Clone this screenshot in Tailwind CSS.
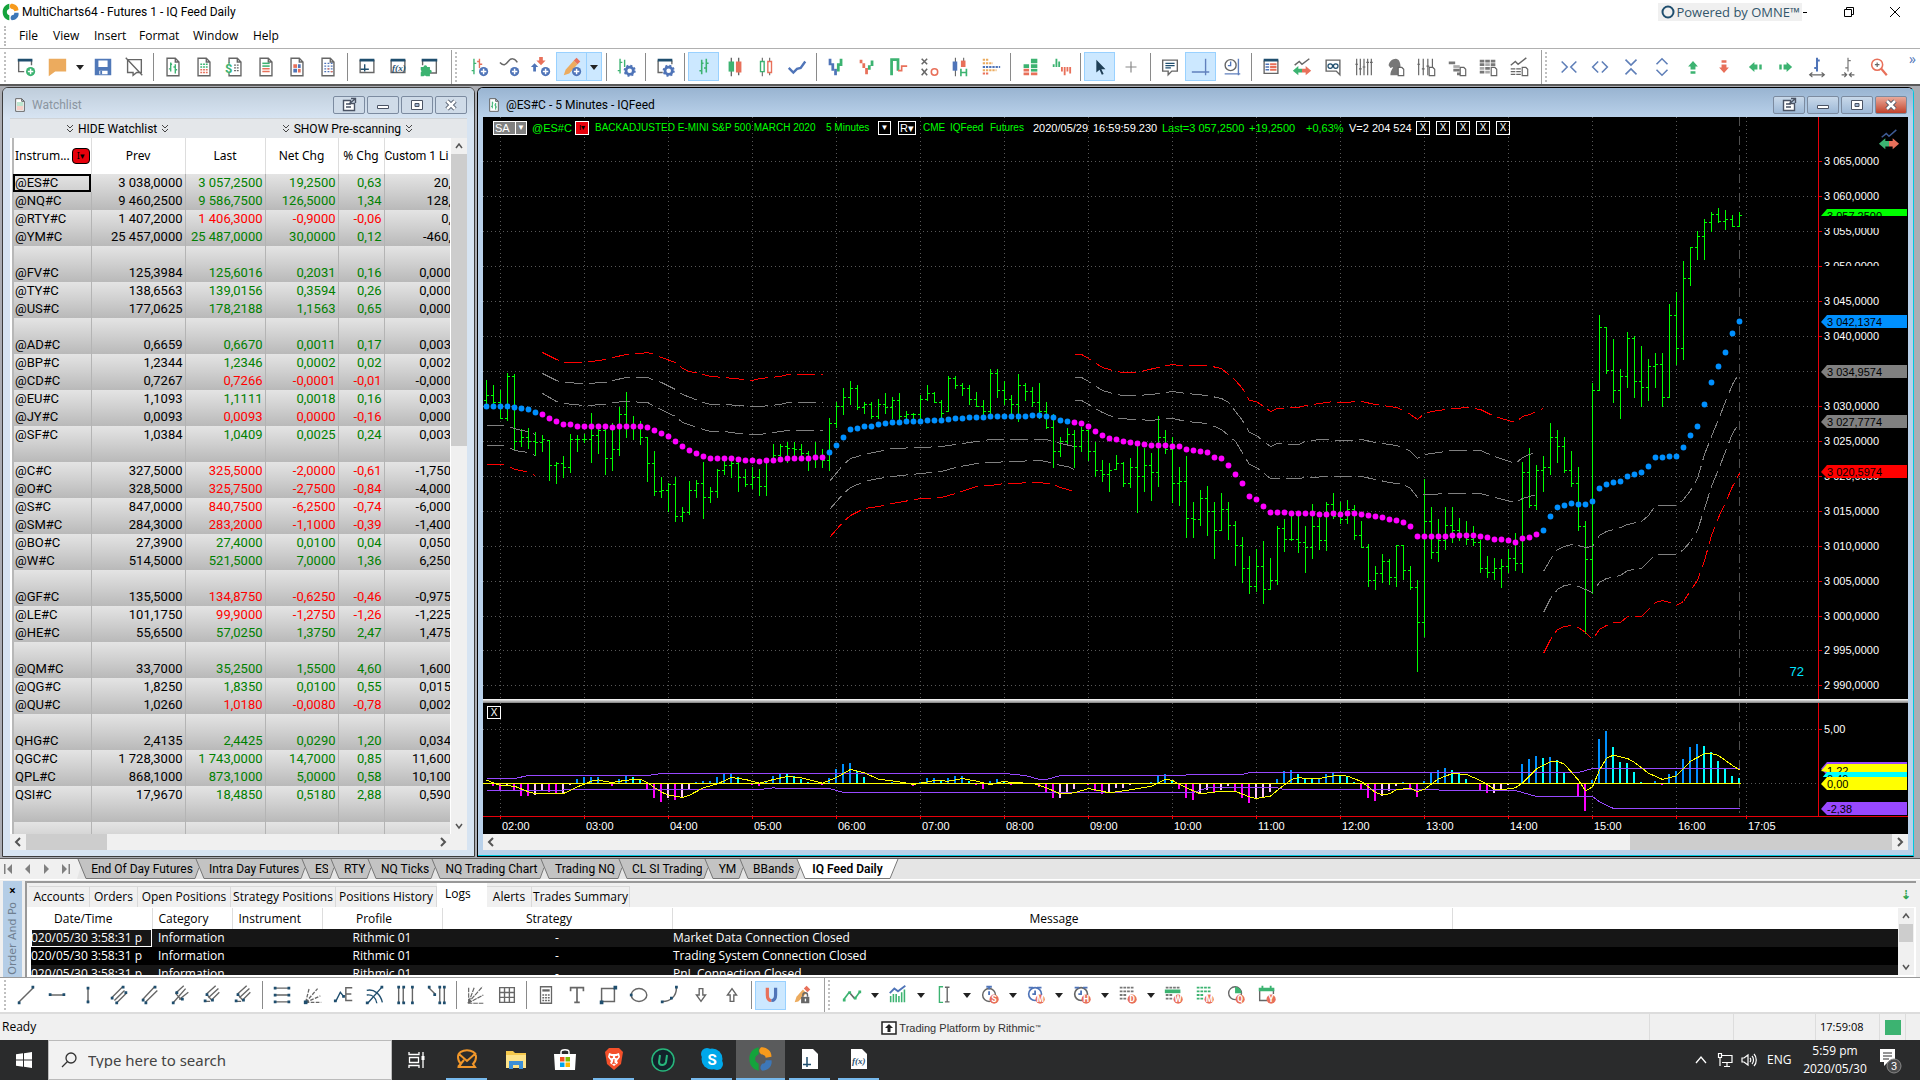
<!DOCTYPE html>
<html lang="en">
<head>
    <meta charset="UTF-8">
    <meta name="viewport" content="width=device-width, initial-scale=1.0">
    <title>MultiCharts64 - Futures 1 - IQ Feed Daily</title>
    <script src="https://cdn.jsdelivr.net/npm/@tailwindcss/browser@4"></script>
</head>

<body class="min-h-screen flex flex-col bg-white text-black text-[12px] leading-4 font-['Open_Sans','Noto_Sans',sans-serif] overflow-x-hidden">

    <!-- Icon sprite -->
    <svg class="hidden" xmlns="http://www.w3.org/2000/svg">
        <defs>
            <g id="plus"><circle cx="17" cy="17" r="5" fill="#4f74b8"/><path d="M17 14v6M14 17h6" stroke="#fff" stroke-width="1.6"/></g>
            <g id="gear"><circle cx="16" cy="16" r="4" fill="none" stroke="#4f74b8" stroke-width="3"/><circle cx="16" cy="16" r="5.6" fill="none" stroke="#4f74b8" stroke-width="2" stroke-dasharray="2.2 2.2"/></g>
            <path id="page" d="M5.500 2.500h9l4 4v15h-13zM14.500 2.500v4h4" fill="#fff" stroke="#666" stroke-width="1.500"/>
            <path id="leaf" d="M15.500 12.500h4l2 2v7h-6z" fill="#fff" stroke="#666" stroke-width="1.300"/>
            <g id="cal" fill="#777"><path d="M3 3h3v2H3zM7 3h3v2H7zM11 3h3v2h-3zM15 3h3v2h-3zM3 7h3v2H3zM7 7h3v2H7zM11 7h3v2h-3zM15 7h3v2h-3zM3 11h3v2H3zM7 11h3v2H7zM3 15h3v2H3zM7 15h3v2H7z"/></g>
            <circle id="badge" cx="16.500" cy="16.500" r="5" fill="#e8705a"/>
        </defs>
        <symbol id="i-new" viewBox="0 0 24 24"><path d="M4 5v12h6M18 5v5" fill="none" stroke="#666" stroke-width="1.500"/><path d="M3 3h16v3H3z" fill="#1f4e6e"/><circle cx="17" cy="17" r="5" fill="#3cb371"/><path d="M17 14v6M14 17h6" stroke="#fff" stroke-width="1.600"/></symbol>
        <symbol id="i-open" viewBox="0 0 24 24"><path d="M3 3h19v14H10l-7 5z" fill="#ecab5e"/></symbol>
        <symbol id="i-save" viewBox="0 0 24 24"><path d="M3 3h18v18H3z" fill="#5078b8"/><path d="M7 5h10v7H7zM8 16h9v4H8z" fill="#fff"/><path d="M9 16h2v4H9z" fill="#5078b8"/></symbol>
        <symbol id="i-close" viewBox="0 0 24 24"><path d="M5 4h15v14h-5l-4 3v-3H5zM3 2l18 19" fill="none" stroke="#666" stroke-width="1.500"/></symbol>
        <symbol id="i-doc1" viewBox="0 0 24 24"><use href="#page"/><path d="M9.500 7v10M14.500 9v10M7.500 14h2M9.500 9h1.500M12.500 12h2M14.500 15h2" stroke="#3cb371" stroke-width="1.500"/></symbol>
        <symbol id="i-doc2" viewBox="0 0 24 24"><use href="#page"/><path d="M8 9h9M8 12h9" stroke="#3cb371" stroke-width="1.500" stroke-dasharray="2 1"/><path d="M8 15h9M8 18h9" stroke="#e8705a" stroke-width="1.500" stroke-dasharray="2 1"/></symbol>
        <symbol id="i-doc3" viewBox="0 0 24 24"><use href="#page"/><path d="M1 8h8v11H1z" fill="#fff"/><text x="1" y="18" font-size="14" font-family="Roboto" font-weight="700" fill="#3cb371">$</text><path d="M11 10h6M11 13h6M11 16h6" stroke="#666" stroke-width="1.500" stroke-dasharray="2 1"/></symbol>
        <symbol id="i-doc4" viewBox="0 0 24 24"><use href="#page"/><path d="M8 8h8" stroke="#3cb371" stroke-width="1.700"/><path d="M8 11h8" stroke="#3cb371" stroke-width="1.700"/><path d="M8 14h8M8 17h8" stroke="#e8705a" stroke-width="1.700"/></symbol>
        <symbol id="i-doc5" viewBox="0 0 24 24"><use href="#page"/><path d="M8 9h4v4H8z" fill="#e8705a"/><path d="M8 14h4v4H8zM13 9h3v4h-3z" fill="#4f74b8"/><path d="M13 14h3v4h-3z" fill="#e8705a"/></symbol>
        <symbol id="i-doc6" viewBox="0 0 24 24"><use href="#page"/><path d="M8 8h9M8 11h9M8 14h9M8 17h9" stroke="#4f74b8" stroke-width="1.500" stroke-dasharray="2 1.500"/><path d="M11.500 14h2M15 17h2" stroke="#e8705a" stroke-width="1.500"/></symbol>
        <symbol id="i-win1" viewBox="0 0 24 24"><path d="M4.500 4v14h15V4" fill="none" stroke="#666" stroke-width="1.500"/><path d="M4 3h16v3H4z" fill="#1f4e6e"/><path d="M9.500 9v8M5 14.500h9M9.500 14.500h2" stroke="#1f4e6e" stroke-width="1.500"/></symbol>
        <symbol id="i-win2" viewBox="0 0 24 24"><path d="M4.500 4v14h15V4" fill="none" stroke="#666" stroke-width="1.500"/><path d="M4 3h16v3H4z" fill="#1f4e6e"/><text x="5.500" y="16" font-size="10" font-style="italic" font-family="Liberation Serif" font-weight="700" fill="#1f4e6e">f(x)</text></symbol>
        <symbol id="i-win3" viewBox="0 0 24 24"><path d="M12 18.500h8V4M5 4v6" fill="none" stroke="#666" stroke-width="1.500"/><path d="M4 3h17v3H4z" fill="#1f4e6e"/><path d="M3 12h3a2 2 0 1 1 4 0h3v3a2 2 0 1 1 0 4v3h-4a2 2 0 0 0-3 0H3v-4a2 2 0 0 0 0-3z" fill="#3cb371"/></symbol>
        <symbol id="i-barsadd" viewBox="0 0 24 24"><path d="M6.500 3v17M4 16h2.500M6.500 8H9" stroke="#3cb371" stroke-width="1.500"/><path d="M12.500 3v10M10 6h2.500M12.500 9h3" stroke="#e8705a" stroke-width="1.500"/><use href="#plus"/></symbol>
        <symbol id="i-curveadd" viewBox="0 0 24 24"><path d="M1 7c4 4 6 3 9-1s7-4 10 1" fill="none" stroke="#666" stroke-width="1.600"/><use href="#plus"/></symbol>
        <symbol id="i-sigadd" viewBox="0 0 24 24"><path d="M12 10l5-5h-3V1h-4v4H7z" fill="#e8705a"/><path d="M5 8l4 4H6.500v5h-3v-5H1z" fill="#4f74b8"/><use href="#plus"/></symbol>
        <symbol id="i-pencil" viewBox="0 0 24 24"><path d="M3 21l2-6L14 5l4 4-9 10z" fill="#ecab5e"/><path d="M14 5l3-3 4 4-3 3z" fill="#e8705a"/><use href="#plus"/></symbol>
        <symbol id="i-barsgear" viewBox="0 0 24 24"><path d="M5.500 3v16M3 16h2.500M5.500 7H8M10.500 4v8" stroke="#3cb371" stroke-width="1.500"/><use href="#gear"/></symbol>
        <symbol id="i-wingear" viewBox="0 0 24 24"><path d="M4.500 5v13h5M19.500 5v4" fill="none" stroke="#666" stroke-width="1.500"/><path d="M4 3h16v3H4z" fill="#1f4e6e"/><use href="#gear"/></symbol>
        <symbol id="i-ohlc" viewBox="0 0 24 24"><path d="M9.500 4v16M14.500 3v15M7 16h2.500M9.500 8h2M12 13h2.500M14.500 8H17" stroke="#3cb371" stroke-width="1.700"/></symbol>
        <symbol id="i-candle" viewBox="0 0 24 24"><path d="M8 2v20M16 2v19" stroke="#666" stroke-width="1.500"/><path d="M5 6h6v11H5z" fill="#3cb371"/><path d="M13 6h6v12h-6z" fill="#e8705a"/></symbol>
        <symbol id="i-hollow" viewBox="0 0 24 24"><path d="M8 2v20M16 2v19" stroke="#666" stroke-width="1.200"/><path d="M6 6h4v11H6z" fill="#fff" stroke="#3cb371" stroke-width="1.500"/><path d="M14 6h4v12h-4z" fill="#fff" stroke="#e8705a" stroke-width="1.500"/></symbol>
        <symbol id="i-line" viewBox="0 0 24 24"><path d="M3 13l5 5 4-4 4-1 5-7" fill="none" stroke="#4f74b8" stroke-width="2.600"/></symbol>
        <symbol id="i-v1" viewBox="0 0 24 24"><path d="M4 3h3v7H4zM7 8h3v8H7z" fill="#4f74b8"/><path d="M10 14h3v7h-3z" fill="#4f74b8"/><path d="M13 8h3v9h-3zM16 3h3v8h-3z" fill="#3cb371"/></symbol>
        <symbol id="i-v2" viewBox="0 0 24 24"><path d="M4 4h3v4H4zM7 8h3v5H7zM10 13h3v7h-3z" fill="#e8705a"/><path d="M13 10h3v5h-3zM16 5h3v6h-3z" fill="#3cb371"/></symbol>
        <symbol id="i-kagi" viewBox="0 0 24 24"><path d="M5 21V4h7v12" fill="none" stroke="#3cb371" stroke-width="3"/><path d="M12 16h4V11h6" fill="none" stroke="#e8705a" stroke-width="1.800"/></symbol>
        <symbol id="i-pf" viewBox="0 0 24 24"><path d="M4 3l6 6M10 3l-6 6M4 14l6 7M10 14l-6 7" stroke="#666" stroke-width="1.700"/><circle cx="18" cy="17.500" r="3.500" fill="none" stroke="#e8705a" stroke-width="1.700"/></symbol>
        <symbol id="i-ha" viewBox="0 0 24 24"><path d="M7 2v20M16 2v10" stroke="#666" stroke-width="1.200"/><path d="M4 6h5v10H4z" fill="#4f74b8"/><path d="M13 5h5v7h-5z" fill="#e8705a"/><path d="M13 14v8M19 14v8M13 18h6" stroke="#3cb371" stroke-width="1.800"/></symbol>
        <symbol id="i-profile" viewBox="0 0 24 24"><path d="M3 4h6M3 8h11" stroke="#ecab5e" stroke-width="2.200" stroke-dasharray="2.500 1"/><path d="M3 12h19" stroke="#4f74b8" stroke-width="2.200" stroke-dasharray="2.500 1"/><path d="M3 15.500h15" stroke="#ecab5e" stroke-width="2.200" stroke-dasharray="2.500 1"/><path d="M3 19h7" stroke="#e8705a" stroke-width="2.200" stroke-dasharray="2.500 1"/></symbol>
        <symbol id="i-depth" viewBox="0 0 24 24"><path d="M13 3h7v5h-7zM5 9h6v4H5zM13 9h7v4h-7z" fill="#3cb371"/><path d="M5 14h6v3H5zM5 18h6v3H5zM13 18h7v3h-7z" fill="#e8705a"/><path d="M13 14h7v3h-7z" fill="#3cb371"/></symbol>
        <symbol id="i-delta" viewBox="0 0 24 24"><path d="M4 12V9M7 12V3M10 12V6" fill="none" stroke="#3cb371" stroke-width="2"/><path d="M13 12v5M16 12v9M19 12v5M22 12v7" fill="none" stroke="#e8705a" stroke-width="2"/></symbol>
        <symbol id="i-cursor" viewBox="0 0 24 24"><path d="M8 4v14l3.500-3 2.500 5.500 2-1-2.500-5H18z" fill="#1f3f56"/></symbol>
        <symbol id="i-cross" viewBox="0 0 24 24"><path d="M12 6v12M6 12h12" stroke="#888" stroke-width="1.300"/></symbol>
        <symbol id="i-note" viewBox="0 0 24 24"><path d="M4 4.500h16v12h-6l-4 4v-4H4z" fill="#fff" stroke="#666" stroke-width="1.500"/><path d="M7 8h10M7 10.500h10M7 13h6" stroke="#1f4e6e" stroke-width="1.500"/></symbol>
        <symbol id="i-axis" viewBox="0 0 24 24"><path d="M17 3v18M2 17.500h19" stroke="#6080bd" stroke-width="1.500"/></symbol>
        <symbol id="i-clock" viewBox="0 0 24 24"><path d="M19 3v18M4 19.500h17" stroke="#6080bd" stroke-width="1.500"/><circle cx="10.500" cy="10" r="6" fill="#fff" stroke="#666" stroke-width="1.500"/><path d="M10.500 6v4.500h-3" fill="none" stroke="#4f74b8" stroke-width="1.500"/></symbol>
        <symbol id="i-list" viewBox="0 0 24 24"><path d="M4.500 5v14h15V5" fill="none" stroke="#666" stroke-width="1.500"/><path d="M4 3h16v3H4z" fill="#1f4e6e"/><path d="M6 9h4M6 12h4M6 15h4" stroke="#4f74b8" stroke-width="1.600"/><path d="M11 9h7M11 12h7M11 15h7" stroke="#e8705a" stroke-width="2"/></symbol>
        <symbol id="i-trade" viewBox="0 0 24 24"><path d="M4 10l5-4 3 3 8-6" fill="none" stroke="#666" stroke-width="1.600"/><path d="M2 16l6-5v3h4v4H8v3z" fill="#3cb371"/><path d="M22 16l-6-5v3h-4v4h4v3z" fill="#e8705a"/></symbol>
        <symbol id="i-trade2" viewBox="0 0 24 24"><path d="M4 9l5-4 3 3 8-7" fill="none" stroke="#3d5a94" stroke-width="1.600"/><path d="M1 16l7-6v3h4v6H8v3z" fill="#3cb371"/><path d="M23 16l-7-6v3h-4v6h4v3z" fill="#e8705a"/></symbol>
        <symbol id="i-glasses" viewBox="0 0 24 24"><path d="M4.500 4.500h15v16l-4-4h-11z" fill="#fff" stroke="#666" stroke-width="1.500"/><circle cx="9" cy="11" r="2.500" fill="none" stroke="#1f4e6e" stroke-width="1.300"/><circle cx="15" cy="11" r="2.500" fill="none" stroke="#1f4e6e" stroke-width="1.300"/></symbol>
        <symbol id="i-sliders" viewBox="0 0 24 24"><path d="M4 3v18M8 3v18M12 3v18M16 3v18M20 3v18M2.500 9h3M6.500 14h3M10.500 12h3M14.500 7h3M18.500 7h3" stroke="#666" stroke-width="1.300"/></symbol>
        <symbol id="i-knight" viewBox="0 0 24 24"><path d="M7 21c0-5 2-6 3-9l-3 1-2-3c1-4 4-7 8-7 3 0 5 4 5 8v10z" fill="#777"/><use href="#leaf"/></symbol>
        <symbol id="i-slpage" viewBox="0 0 24 24"><path d="M4 3v18M9 3v18M14 3v18M19 3v9M2.500 9h3M7.500 14h3M12.500 11h3" stroke="#666" stroke-width="1.300"/><use href="#leaf"/></symbol>
        <symbol id="i-steps" viewBox="0 0 24 24"><path d="M3 6h7v3H3z" fill="#777"/><path d="M8 10h7v3H8z" fill="#aaa"/><path d="M8 14h7v3H8zM12 18h4v3h-4z" fill="#777"/><use href="#leaf"/></symbol>
        <symbol id="i-table" viewBox="0 0 24 24"><path d="M3 4h5v3H3zM9 4h5v3H9zM15 4h5v3h-5zM3 8h5v3H3zM15 8h5v3h-5zM3 16h5v3H3zM9 12h5v3H9z" fill="#777"/><path d="M9 8h5v3H9zM3 12h5v3H3zM9 16h5v3H9z" fill="#aaa"/><use href="#leaf"/></symbol>
        <symbol id="i-chpage" viewBox="0 0 24 24"><path d="M3 10l5-4 3 3 9-7M3 14h5M3 17h5M3 20h5M9 14h5M9 17h5M9 20h5" fill="none" stroke="#666" stroke-width="1.500"/><use href="#leaf"/></symbol>
        <symbol id="i-inx" viewBox="0 0 24 24"><path d="M4 6l6 6-6 6M20 6l-6 6 6 6" fill="none" stroke="#5f7fb8" stroke-width="1.700"/></symbol>
        <symbol id="i-outx" viewBox="0 0 24 24"><path d="M10 6l-6 6 6 6M14 6l6 6-6 6" fill="none" stroke="#5f7fb8" stroke-width="1.700"/></symbol>
        <symbol id="i-iny" viewBox="0 0 24 24"><path d="M6 4l6 6 6-6M6 20l6-6 6 6" fill="none" stroke="#5f7fb8" stroke-width="1.700"/></symbol>
        <symbol id="i-outy" viewBox="0 0 24 24"><path d="M6 9l6-6 6 6M6 15l6 6 6-6" fill="none" stroke="#5f7fb8" stroke-width="1.700"/></symbol>
        <symbol id="i-up" viewBox="3 3 18 18"><path d="M12 7l4 4.500h-2V14h-4v-2.500H8zM10 15.500h4v2h-4z" fill="#3cb371"/></symbol>
        <symbol id="i-down" viewBox="3 3 18 18"><path d="M12 17l4-4.500h-2V10h-4v2.500H8zM10 6.500h4v2h-4z" fill="#e8705a"/></symbol>
        <symbol id="i-left" viewBox="3 3 18 18"><path d="M7 12l4.500-4v2H14v4h-2.500v2zM15.500 10h2v4h-2z" fill="#3cb371"/></symbol>
        <symbol id="i-right" viewBox="3 3 18 18"><path d="M17 12l-4.500-4v2H10v4h2.500v2zM6.500 10h2v4h-2z" fill="#3cb371"/></symbol>
        <symbol id="i-wide" viewBox="0 0 24 24"><path d="M12 2v15M9 13h3M12 5h3" stroke="#4f74b8" stroke-width="2.200"/><path d="M4 20.500h16M7 18l-3 2.500L7 23M17 18l3 2.500-3 2.500" fill="none" stroke="#666" stroke-width="1.300"/></symbol>
        <symbol id="i-narrow" viewBox="0 0 24 24"><path d="M12 2v15M9 13h3M12 5h3" stroke="#777" stroke-width="1.300"/><path d="M5 20.500h5M14 20.500h5M8 18l2.500 2.500L8 23M16 18l-2.500 2.500 2.500 2.500" fill="none" stroke="#666" stroke-width="1.300"/></symbol>
        <symbol id="i-zoom" viewBox="0 0 24 24"><circle cx="10" cy="9.500" r="6" fill="none" stroke="#e8705a" stroke-width="1.700"/><path d="M14.500 14l6 7" stroke="#e8705a" stroke-width="2.400"/><path d="M10 7v5M7.500 9.500h5" stroke="#666" stroke-width="1.300"/></symbol>

        <!-- Drawing tools -->
        <symbol id="d-trend" viewBox="0 0 24 24"><path d="M4 20L20 4" stroke="#666" stroke-width="1.600"/><path d="M3 19h3v3H3zM18 2h3v3h-3z" fill="#1f4e6e"/></symbol>
        <symbol id="d-hline" viewBox="0 0 24 24"><path d="M4 12h16" stroke="#666" stroke-width="1.600"/><path d="M3 10h3v3H3zM18 10h3v3h-3z" fill="#1f4e6e"/></symbol>
        <symbol id="d-vline" viewBox="0 0 24 24"><path d="M12 4v17" stroke="#666" stroke-width="1.600"/><path d="M10.500 3h3v3h-3zM10.500 18h3v3h-3z" fill="#1f4e6e"/></symbol>
        <symbol id="d-chan" viewBox="0 0 24 24"><path d="M4 15L16 3M7 18L18 7M9 21L20 10" stroke="#666" stroke-width="1.500"/><path d="M3 14h3v3H3zM15 2h3v3h-3zM8 19h3v3H8zM18 8h3v3h-3z" fill="#1f4e6e"/></symbol>
        <symbol id="d-chan2" viewBox="0 0 24 24"><path d="M4 17L17 3M7 20L20 7" stroke="#666" stroke-width="1.500"/><path d="M3 16h3v3H3zM16 2h3v3h-3zM6 19h3v3H6z" fill="#1f4e6e"/></symbol>
        <symbol id="d-fork" viewBox="0 0 24 24"><path d="M3 21L17 5M6 10L15 2M10 17L20 9M6 10l6 7" stroke="#666" stroke-width="1.500"/><path d="M2 19h3v3H2zM6 8h3v3H6zM12 15h3v3h-3z" fill="#1f4e6e"/></symbol>
        <symbol id="d-fork2" viewBox="0 0 24 24"><path d="M4 19h6M6 11l10-9M8 15L19 5M11 18l9-9M6 11l6 7" stroke="#666" stroke-width="1.500"/><path d="M3 17h3v3H3zM5 10h3v3H5zM11 16h3v3h-3z" fill="#1f4e6e"/></symbol>
        <symbol id="d-fib" viewBox="0 0 24 24"><path d="M4 4.500h16M4 12h16M4 19.500h16" stroke="#666" stroke-width="1.500"/><path d="M3 3h3v3H3zM18 3h3v3h-3zM3 18h3v3H3zM18 18h3v3h-3zM3 10.500h3v3H3zM18 10.500h3v3h-3z" fill="#1f4e6e"/></symbol>
        <symbol id="d-fan" viewBox="0 0 24 24"><path d="M4 20h17M4 20L20 13M4 20L17 5M4 20L8 4" stroke="#666" stroke-width="1.400" stroke-dasharray="4 1.500"/><path d="M2 18h4v4H2z" fill="#1f4e6e"/></symbol>
        <symbol id="d-elliott" viewBox="0 0 24 24"><path d="M3 19l5-10 4 5" fill="none" stroke="#1f4e6e" stroke-width="1.500"/><path d="M21 4h-7v14h7M14 11h6" fill="none" stroke="#666" stroke-width="1.600"/><path d="M1 17h3v3H1zM10 12h3v3h-3z" fill="#1f4e6e"/></symbol>
        <symbol id="d-arc" viewBox="0 0 24 24"><path d="M3 7c8-2 15 4 17 13M3 12c6-1 10 3 11 9M4 21L19 4" fill="none" stroke="#1f4e6e" stroke-width="1.500"/><path d="M2 19h3v3H2zM18 2h3v3h-3z" fill="#1f4e6e"/></symbol>
        <symbol id="d-zones" viewBox="0 0 24 24"><path d="M4 4v17M9 4v17M19 4v17" stroke="#666" stroke-width="1.500"/><path d="M2.500 2h3v3h-3zM8 2h3v3H8zM17.500 2h3v3h-3zM2.500 19h3v3h-3zM8 19h3v3H8zM17.500 19h3v3h-3z" fill="#1f4e6e"/></symbol>
        <symbol id="d-zones2" viewBox="0 0 24 24"><path d="M3 4l7 7M15 4v17M20 4v17" fill="none" stroke="#666" stroke-width="1.500"/><path d="M2 2h3v3H2zM8 10h3v3H8zM13.500 2h3v3h-3zM18.500 2h3v3h-3zM13.500 19h3v3h-3zM18.500 19h3v3h-3z" fill="#1f4e6e"/></symbol>
        <symbol id="d-gann" viewBox="0 0 24 24"><path d="M3 21L19 3M3 21h17M3 21L20 12M4 4v17M4 20L10 4" stroke="#666" stroke-width="1.300" stroke-dasharray="5 1"/></symbol>
        <symbol id="d-grid" viewBox="0 0 24 24"><path d="M4 4h16v16H4zM9.300 4v16M14.600 4v16M4 9.300h16M4 14.600h16" fill="none" stroke="#666" stroke-width="1.500"/></symbol>
        <symbol id="d-calc" viewBox="0 0 24 24"><path d="M6 3h12v18H6z" fill="none" stroke="#666" stroke-width="1.400"/><path d="M8 7h8" stroke="#666" stroke-width="2.500"/><path d="M8 12h8M8 15h8M8 18h8" stroke="#666" stroke-width="1.500" stroke-dasharray="2 1"/></symbol>
        <symbol id="d-text" viewBox="0 0 24 24"><path d="M5 8V4h14v4M12 4v16M9 20h6" fill="none" stroke="#666" stroke-width="1.800"/></symbol>
        <symbol id="d-rect" viewBox="0 0 24 24"><path d="M5 5h14v14H5z" fill="none" stroke="#666" stroke-width="1.600"/><path d="M3 18h4v4H3zM18 2h4v4h-4z" fill="#1f4e6e"/></symbol>
        <symbol id="d-oval" viewBox="0 0 24 24"><ellipse cx="12" cy="12" rx="8.500" ry="7" fill="none" stroke="#666" stroke-width="1.600"/><path d="M2 10.500h3v3H2z" fill="#1f4e6e"/></symbol>
        <symbol id="d-curve" viewBox="0 0 24 24"><path d="M4 19c8 0 15-5 15-15" fill="none" stroke="#666" stroke-width="1.600"/><path d="M2 18h3v3H2zM17.500 2h3v3h-3zM12 14h3v3h-3z" fill="#1f4e6e"/></symbol>
        <symbol id="d-dn" viewBox="0 0 24 24"><path d="M10 5h4v7h3l-5 7-5-7h3z" fill="none" stroke="#666" stroke-width="1.500"/></symbol>
        <symbol id="d-upa" viewBox="0 0 24 24"><path d="M10 19h4v-7h3l-5-7-5 7h3z" fill="none" stroke="#666" stroke-width="1.500"/></symbol>
        <symbol id="d-magnet" viewBox="0 0 24 24"><path d="M8 4v8c0 4 2 6 4.500 6" fill="none" stroke="#e8705a" stroke-width="3.500"/><path d="M17 4v8c0 4-2 6-4.500 6" fill="none" stroke="#4f74b8" stroke-width="3.500"/></symbol>
        <symbol id="d-lock" viewBox="0 0 24 24"><path d="M4 20l2-6 7-8 4 4-9 9z" fill="#ecab5e"/><path d="M14 5l3-3 4 4-3 3z" fill="#e8705a"/><path d="M11 14h9v7h-9z" fill="#666"/><path d="M13 14v-2a2.500 2.500 0 0 1 5 0v2" fill="none" stroke="#666" stroke-width="1.600"/><path d="M15 16h1.500v3H15z" fill="#fff"/></symbol>
        <symbol id="t-zig" viewBox="0 0 24 24"><path d="M3 17l6-8" stroke="#3cb371" stroke-width="1.800"/><path d="M9 9l6 7" stroke="#666" stroke-width="1.800"/><path d="M15 16l6-8" stroke="#3cb371" stroke-width="1.800"/><path d="M2 16h3v3H2zM8 8h3v3H8zM14 14h3v3h-3zM19 7h3v3h-3z" fill="#3cb371"/></symbol>
        <symbol id="t-area" viewBox="0 0 24 24"><path d="M3 10l5-5 4 3 8-6" fill="none" stroke="#4f74b8" stroke-width="2"/><path d="M4 20v-7M7 20v-9M10 20v-9M13 20v-7M16 20V9M19 20V6" stroke="#3cb371" stroke-width="1.700"/></symbol>
        <symbol id="t-range" viewBox="0 0 24 24"><path d="M11 3H7v17h4" fill="none" stroke="#3cb371" stroke-width="1.500"/><path d="M15.500 3v17M13 3.500h5M13 19.500h5" stroke="#666" stroke-width="1.500"/></symbol>
        <symbol id="t-sec" viewBox="0 0 24 24"><circle cx="11" cy="12" r="7" fill="none" stroke="#666" stroke-width="1.600"/><path d="M8 3h6M11 3v3M11 8v4" stroke="#4f74b8" stroke-width="2"/><use href="#badge"/><text x="13.700" y="20" font-size="9" font-family="Roboto" font-weight="700" fill="#fff">S</text></symbol>
        <symbol id="t-min" viewBox="0 0 24 24"><circle cx="11" cy="11" r="7" fill="none" stroke="#4f74b8" stroke-width="1.800"/><path d="M4 4h5M13 4h5M11 7v4H8" fill="none" stroke="#4f74b8" stroke-width="2"/><use href="#badge"/><text x="12.800" y="20" font-size="9" font-family="Roboto" font-weight="700" fill="#fff">M</text></symbol>
        <symbol id="t-hour" viewBox="0 0 24 24"><circle cx="11" cy="11" r="7" fill="none" stroke="#666" stroke-width="1.800"/><path d="M4 4h5M13 4h5M11 7v4H8" fill="none" stroke="#4f74b8" stroke-width="2"/><use href="#badge"/><text x="13.300" y="20" font-size="9" font-family="Roboto" font-weight="700" fill="#fff">H</text></symbol>
        <symbol id="t-day" viewBox="0 0 24 24"><use href="#cal"/><use href="#badge"/><text x="13.500" y="20" font-size="9" font-family="Roboto" font-weight="700" fill="#fff">D</text></symbol>
        <symbol id="t-week" viewBox="0 0 24 24"><use href="#cal"/><path d="M2 6h17v4H2z" fill="#3cb371"/><use href="#badge"/><text x="12.600" y="20" font-size="9" font-family="Roboto" font-weight="700" fill="#fff">W</text></symbol>
        <symbol id="t-month" viewBox="0 0 24 24"><path d="M3 3h3v2H3zM7 3h3v2H7zM11 3h3v2h-3zM15 3h3v2h-3zM3 7h3v2H3zM7 7h3v2H7zM11 7h3v2h-3zM15 7h3v2h-3zM3 11h3v2H3zM7 11h3v2H7zM3 15h3v2H3zM7 15h3v2H7z" fill="#3cb371"/><use href="#badge"/><text x="12.800" y="20" font-size="9" font-family="Roboto" font-weight="700" fill="#fff">M</text></symbol>
        <symbol id="t-quarter" viewBox="0 0 24 24"><circle cx="11" cy="10" r="7" fill="none" stroke="#666" stroke-width="1.500"/><path d="M11 3a7 7 0 0 1 7 7h-7z" fill="#3cb371"/><use href="#badge"/><text x="13.300" y="20" font-size="9" font-family="Roboto" font-weight="700" fill="#fff">Q</text></symbol>
        <symbol id="t-year" viewBox="0 0 24 24"><path d="M4 5v13h8M19 6v5" fill="none" stroke="#666" stroke-width="1.500"/><path d="M3 4h17v4H3zM6 2h2v3H6zM15 2h2v3h-2z" fill="#3cb371"/><use href="#badge"/><text x="13.600" y="20" font-size="9" font-family="Roboto" font-weight="700" fill="#fff">Y</text></symbol>

        <!-- Window buttons -->
        <symbol id="w-pop" viewBox="0 0 20 16"><path d="M4.500 3.500h7v3h4v7h-11zM7 7h5M7 10h5" fill="#fff" stroke="#4a5364" stroke-width="1.400"/><path d="M10 7l6-5M12 1.500h4.500V6" fill="none" stroke="#4a5364" stroke-width="1.400"/></symbol>
        <symbol id="w-min" viewBox="0 0 20 16"><path d="M4.500 8.500h11v3h-11z" fill="#fff" stroke="#4a5364"/></symbol>
        <symbol id="w-max" viewBox="0 0 20 16"><path d="M4.500 3.500h11v9h-11z" fill="#fff" stroke="#4a5364"/><path d="M8 6.500h4v3H8z" fill="#9db3cf" stroke="#4a5364"/></symbol>
        <symbol id="w-x" viewBox="0 0 20 16"><path d="M6 4l8 8M14 4l-8 8" stroke="#4a5364" stroke-width="4.500"/><path d="M6 4l8 8M14 4l-8 8" stroke="#fff" stroke-width="2.500"/></symbol>
        <symbol id="mc" viewBox="0 0 24 24"><path d="M10 2C4 3 2 8 2 12c0 5 3 9 8 10v-6c-2-1-3-2-3-4s1-3 3-4z" fill="#14a33c"/><path d="M12 2c5 0 9 3 9 8l-5 1c0-2-2-3-4-3-2-2-2-4 0-6z" fill="#f79a1c"/><path d="M21 13c1 5-3 9-8 9-2-1-2-4 0-6 2 0 3-1 3-3z" fill="#3d77b8"/></symbol>
    </svg>

    <!-- Title bar -->
    <header class="flex items-center h-[23px] pl-px">
        <svg class="w-5 h-5"><use href="#mc"/></svg>
        <h1 class="ml-px font-['Roboto',sans-serif]">MultiCharts64 - Futures 1 - IQ Feed Daily</h1>
        <div class="ml-auto flex items-center bg-[#f0f0f0] h-[18px] px-[2px] text-[13px] text-[#33566b] font-['Open_Sans',sans-serif]">
            <svg class="w-4 h-4" viewBox="0 0 16 16"><circle cx="8" cy="8" r="5.500" fill="none" stroke="#1f4e6e" stroke-width="2"/></svg>
            <span>Powered by OMNE™</span>
        </div>
        <button class="w-6 text-left" aria-label="Minimize"><svg class="w-1.5 h-4" viewBox="0 0 6 16"><path d="M1 8.500h4" stroke="#000"/></svg></button>
        <button class="w-[46px] flex justify-center" aria-label="Restore"><svg class="w-3 h-3" viewBox="0 0 12 12"><path d="M1.500 3.500h7v7h-7zM3.500 3.500v-2h7v7h-2" fill="none" stroke="#000"/></svg></button>
        <button class="w-[46px] mr-[2px] flex justify-center" aria-label="Close"><svg class="w-3 h-3" viewBox="0 0 12 12"><path d="M1 1l10 10M11 1L1 11" stroke="#000"/></svg></button>
    </header>

    <!-- Menu -->
    <nav class="flex items-center h-[26px] border-b border-[#b0b0b0] pl-[4px]">
        <span class="h-5 border-l-2 border-dotted border-[#bbb]"></span>
        <a href="#" class="w-[34px] ml-[13px]">File</a>
        <a href="#" class="w-[41px]">View</a>
        <a href="#" class="w-[45px]">Insert</a>
        <a href="#" class="w-[54px]">Format</a>
        <a href="#" class="w-[60px]">Window</a>
        <a href="#">Help</a>
    </nav>

    <div id="mainToolbar" class="flex items-center h-[35px] pl-[4px]"></div>

    <!-- Workspace -->
    <main class="flex h-[774px] bg-[#abadb3] border-t-2 border-[#5a5a5a] pl-[2px] pr-[6px] gap-[2px] pt-px">

        <!-- Watchlist window -->
        <section class="w-[473px] shrink-0 h-[770px] flex flex-col border border-[#3c3c3c] rounded-t-md bg-[#d7e4f2] px-[7px] overflow-hidden">
            <div class="flex items-center h-[30px] -mx-[7px] px-[7px] pt-1 bg-linear-to-b from-[#bfcddb] to-[#d7e4f2] text-[#8b95a0]">
                <svg class="w-5 h-4 mr-[2px]"><use href="#i-doc2"/></svg>
                <h2 class="font-['Roboto',sans-serif]">Watchlist</h2>
                <div class="ml-auto flex gap-[2px]" data-controls="idle"></div>
            </div>
            <div class="flex h-[20px] items-center justify-between bg-[#e4e7ea] border-t border-[#d0d4d8] pl-[56px] pr-[54px] font-['Roboto',sans-serif]">
                <button class="flex items-center gap-1"><svg class="w-2 h-2" viewBox="0 0 8 8"><path d="M1 0l3 3 3-3M1 4l3 3 3-3" fill="none" stroke="#444"/></svg>HIDE Watchlist <svg class="w-2 h-2" viewBox="0 0 8 8"><path d="M1 0l3 3 3-3M1 4l3 3 3-3" fill="none" stroke="#444"/></svg></button>
                <button class="flex items-center gap-1"><svg class="w-2 h-2" viewBox="0 0 8 8"><path d="M1 0l3 3 3-3M1 4l3 3 3-3" fill="none" stroke="#444"/></svg>SHOW Pre-scanning <svg class="w-2 h-2" viewBox="0 0 8 8"><path d="M1 0l3 3 3-3M1 4l3 3 3-3" fill="none" stroke="#444"/></svg></button>
            </div>
            <div class="flex h-[696px] bg-white">
                <div class="w-[440px] h-full overflow-hidden pl-[2px]">
                    <table class="table-fixed w-[438px] border-collapse text-[13px] leading-4 font-['Roboto','Noto_Sans',sans-serif] border-l-2 border-[#b8b8b8]">
                        <colgroup><col class="w-[78px]"><col class="w-[94px]"><col class="w-[80px]"><col class="w-[73px]"><col class="w-[46px]"><col class="w-[67px]"></colgroup>
                        <thead>
                            <tr class="h-[36px] text-[12px] font-['Noto_Sans',sans-serif] bg-white">
                                <th class="font-normal text-left pl-px border-r border-[#ddd] whitespace-nowrap"><span class="inline-block align-middle">Instrum...</span><span class="inline-block align-middle ml-[2px] w-[18px] h-4 rounded-sm border border-black bg-red-600 text-center text-[9px] leading-[14px]">I▾</span></th>
                                <th class="font-normal border-r border-[#ddd]">Prev</th>
                                <th class="font-normal border-r border-[#ddd]">Last</th>
                                <th class="font-normal border-r border-[#ddd]">Net Chg</th>
                                <th class="font-normal border-r border-[#ddd] whitespace-nowrap">% Chg</th>
                                <th class="font-normal text-left whitespace-nowrap text-[12px] font-['Roboto',sans-serif]">Custom 1 Li</th>
                            </tr>
                        </thead>
                        <tbody id="quotes"></tbody>
                    </table>
                </div>
                <div class="w-4 ml-px h-full bg-[#f0f0f0] flex flex-col items-center">
                    <svg class="w-2 h-4 shrink-0" viewBox="0 0 8 16"><path d="M1 10l3-4 3 4" fill="none" stroke="#555" stroke-width="1.500"/></svg>
                    <div class="w-full h-[292px] bg-[#cdcdcd]"></div>
                    <svg class="w-2 h-4 mt-auto shrink-0" viewBox="0 0 8 16"><path d="M1 6l3 4 3-4" fill="none" stroke="#555" stroke-width="1.500"/></svg>
                </div>
            </div>
            <div class="h-4 flex items-center bg-[#f0f0f0]">
                <svg class="w-4 h-3" viewBox="0 0 16 12"><path d="M10 2L6 6l4 4" fill="none" stroke="#555" stroke-width="2"/></svg>
                <div class="w-[81px] h-full bg-[#cdcdcd]"></div>
                <svg class="w-4 h-3 ml-auto mr-4" viewBox="0 0 16 12"><path d="M6 2l4 4-4 4" fill="none" stroke="#555" stroke-width="2"/></svg>
            </div>
        </section>

        <!-- Chart window -->
        <section class="flex-1 min-w-0 h-[770px] flex flex-col border border-black rounded-t-md bg-[#b9d1ea] border-r-[#00c8e0] px-[5px] overflow-hidden">
            <div class="flex items-center h-[29px] -mx-[5px] px-[6px] pt-1 bg-linear-to-b from-[#99b4d1] to-[#b9d1ea]">
                <svg class="w-5 h-4 mr-[2px]"><use href="#i-doc1"/></svg>
                <h2 class="font-['Roboto',sans-serif]">@ES#C - 5 Minutes - IQFeed</h2>
                <div class="ml-auto flex gap-[2px]" data-controls="active"></div>
            </div>

            <div class="relative flex bg-black text-white text-[11px] leading-[14px] font-['Liberation_Sans',Arial,sans-serif]">
                <svg id="price" class="flex-1 min-w-0 h-[582px]" shape-rendering="crispEdges"></svg>
                <div class="relative w-[90px] shrink-0 border-l border-red-600">
                    <svg class="absolute right-2 top-3 w-[22px] h-[22px]"><use href="#i-trade2"/></svg>
                    <div id="priceLabels"></div>
                </div>
                <!-- Status line -->
                <div class="absolute left-[10px] top-[4px] h-[14px] flex items-center whitespace-nowrap text-[#00ff00]">
                    <span class="w-[34px] h-[14px] flex border border-white bg-[#808080] text-white leading-[12px] pl-px justify-between">SA<span class="border-l border-white text-[8px] px-px">▼</span></span>
                    <span class="w-[36px] ml-[5px]">@ES#C</span>
                    <span class="w-[14px] ml-[7px] border border-white bg-red-600 h-[14px] text-[8px] leading-[12px] text-center text-black">I▾</span>
                    <span class="w-[226px] ml-[6px] text-[10px]">BACKADJUSTED E-MINI S&amp;P 500 MARCH 2020</span>
                    <span class="w-[52px] ml-[5px] text-[10px]">5 Minutes</span>
                    <span class="w-[13px] border border-white h-[14px] text-[8px] leading-[12px] text-center text-white">▼</span>
                    <span class="w-[18px] ml-[7px] border border-white h-[14px] leading-[12px] text-white pl-px">R▾</span>
                    <span class="w-[27px] ml-[7px] text-[10px]">CME</span>
                    <span class="w-[40px] text-[10px]">IQFeed</span>
                    <span class="w-[43px] text-[10px]">Futures</span>
                    <span class="w-[60px] text-white">2020/05/29</span>
                    <span class="w-[69px] text-white">16:59:59.230</span>
                    <span class="w-[87px] text-[11px]">Last=3 057,2500</span>
                    <span class="w-[57px]">+19,2500</span>
                    <span class="w-[43px]">+0,63%</span>
                    <span class="w-[67px] text-white">V=2 204 524</span>
                    <span class="flex gap-[6px] text-white" id="closers"></span>
                </div>
                <span class="absolute right-[104px] bottom-[20px] text-[13px] text-[#00e5ff]">72</span>
            </div>

            <div class="h-1 bg-linear-to-b from-white to-[#808080] shrink-0"></div>

            <div class="relative flex bg-black text-white text-[11px] leading-[14px] font-['Liberation_Sans',Arial,sans-serif]">
                <svg id="study" class="flex-1 min-w-0 h-[113px]" shape-rendering="crispEdges"></svg>
                <div id="studyLabels" class="relative w-[90px] shrink-0 border-l border-red-600"></div>
                <button class="absolute left-1 top-[3px] w-[14px] h-[13px] border border-white text-[10px] leading-[11px]" aria-label="Close study">X</button>
            </div>
            <div class="h-[18px] bg-black border-t border-red-600 shrink-0">
                <svg id="times" class="w-full h-[17px] text-[11px] font-['Liberation_Sans',Arial,sans-serif]"></svg>
            </div>
            <div class="h-4 flex items-center bg-[#f0f0f0] shrink-0">
                <svg class="w-4 h-3" viewBox="0 0 16 12"><path d="M10 2L6 6l4 4" fill="none" stroke="#555" stroke-width="2"/></svg>
                <div class="w-[262px] ml-auto h-full bg-[#cdcdcd]"></div>
                <svg class="w-4 h-3" viewBox="0 0 16 12"><path d="M6 2l4 4-4 4" fill="none" stroke="#555" stroke-width="2"/></svg>
            </div>
            <div class="-mx-[5px] mt-auto h-px bg-[#00c8e0]"></div>
        </section>
    </main>

    <!-- Workspace tabs -->
    <nav class="h-[22px] bg-[#e5e5e5] border-t border-[#5a5a5a] flex items-center border-b border-b-white font-['Roboto',sans-serif]">
        <div class="flex items-center justify-around w-[75px] h-full bg-[#f0f0f0]">
            <button aria-label="First"><svg class="w-3 h-3" viewBox="0 0 12 12"><path d="M1 1h1.500v10H1zM9 1v10L4 6z" fill="#808080"/></svg></button>
            <button aria-label="Previous"><svg class="w-3 h-3" viewBox="0 0 12 12"><path d="M8 1v10L3 6z" fill="#808080"/></svg></button>
            <button aria-label="Next"><svg class="w-3 h-3" viewBox="0 0 12 12"><path d="M3 1v10l5-5z" fill="#808080"/></svg></button>
            <button aria-label="Last"><svg class="w-3 h-3" viewBox="0 0 12 12"><path d="M2 1v10l5-5zM8.500 1H10v10H8.500z" fill="#808080"/></svg></button>
        </div>
        <div id="workspaceTabs" class="flex h-full"></div>
    </nav>

    <!-- Order and position tracker -->
    <section class="flex h-[98px] bg-[#f0f0f0] pl-[3px] pt-px border-b border-[#999]">
        <div class="w-[19px] bg-[#b4cde6] flex flex-col items-center justify-between pt-1">
            <button class="text-[12px] leading-3 font-bold" aria-label="Close panel">×</button>
            <span class="[writing-mode:vertical-rl] rotate-180 text-[11px] pt-[2px] whitespace-nowrap text-[#6f7f90] font-['DejaVu_Sans',sans-serif]">Order And Po</span>
        </div>
        <div class="flex-1 min-w-0 ml-[3px] mr-1 border-t-2 border-l-2 border-[#999] flex flex-col overflow-hidden">
            <div class="flex items-end h-[24px] pl-[2px] shrink-0">
                <div id="panelTabs" class="flex items-end h-full"></div>
                <span class="ml-auto mr-[5px] self-center text-[12px] text-[#2ea44f] font-bold">⇣</span>
            </div>
            <div class="flex flex-1 min-h-0 bg-white pt-px border-b-2 border-white">
                <div class="flex-1 min-w-0 overflow-hidden pl-[4px]">
                    <table class="table-fixed w-full border-collapse leading-4">
                        <colgroup><col class="w-[121px]"><col class="w-[80px]"><col class="w-[90px]"><col class="w-[120px]"><col class="w-[230px]"><col class="w-[780px]"><col></colgroup>
                        <thead>
                            <tr class="h-[21px]">
                                <th class="font-normal border-r border-[#ddd] pr-4">Date/Time</th>
                                <th class="font-normal text-left pl-1.5 border-r border-[#ddd]">Category</th>
                                <th class="font-normal text-left pl-1.5 border-r border-[#ddd]">Instrument</th>
                                <th class="font-normal border-r border-[#ddd] pr-4">Profile</th>
                                <th class="font-normal border-r border-[#ddd] pr-4">Strategy</th>
                                <th class="font-normal border-r border-[#ddd] pr-4">Message</th>
                                <th></th>
                            </tr>
                        </thead>
                        <tbody class="text-white" id="logs"></tbody>
                    </table>
                </div>
                <div class="w-4 mr-[2px] bg-[#f0f0f0] flex flex-col items-center">
                    <svg class="w-2 h-4 shrink-0" viewBox="0 0 8 16"><path d="M1 10l3-4 3 4" fill="none" stroke="#555" stroke-width="1.500"/></svg>
                    <div class="w-3.5 h-[18px] bg-[#cdcdcd]"></div>
                    <svg class="w-2 h-4 mt-auto shrink-0" viewBox="0 0 8 16"><path d="M1 6l3 4 3-4" fill="none" stroke="#555" stroke-width="1.500"/></svg>
                </div>
            </div>
        </div>
    </section>

    <div id="drawToolbar" class="flex items-center h-[34px] pl-[4px]"></div>

    <!-- Status bar -->
    <footer class="flex items-center h-[28px] bg-[#f0f0f0] border-t-2 border-[#dcdcdc] pl-[2px]">
        <span class="flex-1">Ready</span>
        <span class="flex items-center gap-[2px] text-[#333] font-['Liberation_Sans',Arial,sans-serif] pt-[2px]">
            <svg class="w-4 h-4" viewBox="0 0 16 16"><path d="M1 2h14v12H1z" fill="#fff" stroke="#222" stroke-width="1.500"/><path d="M8 4l4 4H9.500v4h-3V8H4z" fill="#222"/></svg>
            <span class="text-[11px]">Trading Platform by Rithmic<sup class="text-[6px]">™</sup></span>
        </span>
        <span class="flex-1 flex justify-end h-full">
            <span class="w-[84px] border-l border-[#ddd]"></span>
            <span class="w-[82px] border-l border-[#ddd]"></span>
            <span class="w-[64px] border-l border-[#ddd] pl-1 leading-[26px] text-[11px]">17:59:08</span>
            <span class="w-[27px] border-x border-[#ddd] flex items-center justify-center"><span class="w-4 h-[15px] bg-[#3cb371]"></span></span>
            <span class="w-[14px]"></span>
        </span>
    </footer>

    <!-- Taskbar -->
    <footer class="flex h-[40px] bg-[#2a2b2c] text-white">
        <button class="w-[48px] flex items-center justify-center" aria-label="Start"><svg class="w-4 h-4" viewBox="0 0 16 16"><path d="M0 2.300L7 1.300v6.200H0zM8 1.200L16 0v7.500H8zM0 8.500h7v6.200l-7-1zM8 8.500h8V16l-8-1.200z" fill="#fff"/></svg></button>
        <label class="w-[344px] flex items-center bg-[#f2f2f2] border border-[#bbb] pl-[10px]">
            <svg class="w-5 h-5" viewBox="0 0 20 20"><circle cx="12" cy="8" r="5" fill="none" stroke="#333" stroke-width="1.300"/><path d="M8.500 11.500L3 17" stroke="#333" stroke-width="1.300"/></svg>
            <input type="text" aria-label="Search" placeholder="Type here to search" class="ml-[9px] w-64 bg-transparent text-[15px] text-[#444] placeholder:text-[#444] outline-none font-['Noto_Sans',sans-serif]">
        </label>
        <button class="w-[49px] flex items-center justify-center" aria-label="Task view"><svg class="w-[18px] h-[18px]" viewBox="0 0 18 18"><path d="M1 1v2.500h10V1M1 17v-2.500h10V17M1.500 6.500h9v5h-9zM15 1v16" fill="none" stroke="#fff" stroke-width="1.300"/><path d="M13.500 5h3v4h-3z" fill="#fff"/></svg></button>
        <button class="w-[49px] ml-px px-1" aria-label="Mail"><span class="h-full flex items-center justify-center border-b-2 border-[#76b9ed]"><svg class="w-6 h-6" viewBox="0 0 24 24"><path d="M3 10c0-9 18-9 18 0 0 3-1 5-3 7l2 3H4l2-3c-2-2-3-4-3-7zM4 7l8 7 9-8M3 20l6-7" fill="none" stroke="#f0962a" stroke-width="2"/></svg></span></button>
        <button class="w-[49px] flex items-center justify-center" aria-label="Explorer"><svg class="w-6 h-6" viewBox="0 0 24 24"><path d="M2 3h7l2 2h11v15H2z" fill="#f5c84c"/><path d="M2 7h20v13H2z" fill="#fde38a"/><path d="M5 13h14v8h-4v-4H9v4H5z" fill="#3b8fd8"/></svg></button>
        <button class="w-[49px] flex items-center justify-center" aria-label="Store"><svg class="w-6 h-6" viewBox="0 0 24 24"><path d="M8 6V4c0-3 8-3 8 0v2" fill="none" stroke="#fff" stroke-width="1.500"/><path d="M1 6h22l-1 16H2z" fill="#fff"/><path d="M7 9h4.500v4.500H7z" fill="#f25022"/><path d="M12.500 9H17v4.500h-4.500z" fill="#7fba00"/><path d="M7 14.500h4.500V19H7z" fill="#00a4ef"/><path d="M12.500 14.500H17V19h-4.500z" fill="#ffb900"/></svg></button>
        <button class="w-[49px] px-1" aria-label="Brave"><span class="h-full flex items-center justify-center border-b-2 border-[#76b9ed]"><svg class="w-6 h-6" viewBox="0 0 24 24"><path d="M7 1h10l4 4-2 12-7 6-7-6L3 5z" fill="#f4502a"/><path d="M7 6l3 1h4l3-1 1 4-3 4 1 2-4 3-4-3 1-2-3-4z" fill="#fff"/><path d="M8 9l3 1-2 1zM16 9l-3 1 2 1zM12 12v4l-2 1M12 16l2 1" fill="#f4502a" stroke="#f4502a"/></svg></span></button>
        <button class="w-[49px] flex items-center justify-center" aria-label="IObit"><svg class="w-6 h-6" viewBox="0 0 24 24"><circle cx="12" cy="12" r="11" fill="#12232b" stroke="#27b77c" stroke-width="1.500"/><path d="M9 7l-1 7c0 4 6 4 7 0l1-7" fill="none" stroke="#27b77c" stroke-width="2"/></svg></button>
        <button class="w-[49px] px-1" aria-label="Skype"><span class="h-full flex items-center justify-center border-b-2 border-[#76b9ed]"><svg class="w-6 h-6" viewBox="0 0 24 24"><circle cx="12" cy="12" r="10.500" fill="#00a8ea"/><circle cx="7" cy="7" r="6" fill="#00a8ea"/><circle cx="17" cy="17" r="6" fill="#00a8ea"/><text x="7.500" y="17.500" font-size="15" font-weight="700" font-family="Roboto" fill="#fff">S</text></svg></span></button>
        <button class="w-[49px] flex items-center justify-center bg-[#5a5b5c] border-b-2 border-[#76b9ed]" aria-label="MultiCharts"><svg class="w-7 h-7"><use href="#mc"/></svg></button>
        <button class="w-[49px] px-1" aria-label="QuoteManager"><span class="h-full flex items-center justify-center border-b-2 border-[#76b9ed]"><svg class="w-6 h-6" viewBox="0 0 24 24"><path d="M4 2h11l5 5v15H4z" fill="#fff"/><path d="M9 10v10M5 17.500h8" stroke="#1f4e6e" stroke-width="1.500"/></svg></span></button>
        <button class="w-[49px] px-1" aria-label="PowerLanguage"><span class="h-full flex items-center justify-center border-b-2 border-[#76b9ed]"><svg class="w-6 h-6" viewBox="0 0 24 24"><path d="M4 2h11l5 5v15H4z" fill="#fff"/><text x="5" y="17" font-size="9" font-style="italic" font-weight="700" font-family="Liberation Serif" fill="#1f4e6e">f(x)</text></svg></span></button>
        <div class="ml-auto flex items-center">
            <svg class="w-3 h-3 mr-[10px]" viewBox="0 0 12 12"><path d="M1 9l5-6 5 6" fill="none" stroke="#fff" stroke-width="1.300"/></svg>
            <svg class="w-4 h-4 mr-2" viewBox="0 0 16 16"><path d="M5 3.500h10v7H5M10 11v3M7 14.500h6M1.500 1.500h3v4h-3zM3 6v8" fill="none" stroke="#fff" stroke-width="1.200"/></svg>
            <svg class="w-4 h-4 mr-[10px]" viewBox="0 0 16 16"><path d="M1 6h2l4-3v10l-4-3H1zM9 6c1 1 1 3 0 4M11 4c2 2 2 6 0 8M13 2c3 3 3 9 0 12" fill="none" stroke="#fff" stroke-width="1.200"/></svg>
            <span class="w-[31px]">ENG</span>
            <span class="w-[74px] text-center leading-[18px]">5:59 pm<br>2020/05/30</span>
            <svg class="w-8 h-8 ml-[2px] mr-[14px]" viewBox="0 0 32 32"><path d="M6 5h15v13h-7l-4 4v-4H6z" fill="#fff"/><path d="M9 9h9M9 12h9M9 15h6" stroke="#2a2b2c"/><circle cx="20" cy="22" r="7" fill="#4a4b4c" stroke="#888"/><text x="17" y="26" font-size="11" font-family="Roboto" fill="#fff">3</text></svg>
        </div>
    </footer>

    <script>
        // Toolbars: plain ids are buttons, '|' a separator, ':' a new bar, '!' pressed, '+' with a drop-down arrow
        const icon = id => `<svg class="w-[22px] h-[22px]"><use href="#${id}"/></svg>`;
        function tool(item) {
            if (item === '|') return '<span class="w-[8px] shrink-0 flex justify-center"><span class="h-7 w-px bg-[#8a8a8a]"></span></span>';
            if (item === ':') return '<span class="w-[7px] shrink-0"></span><span class="w-px h-[34px] bg-[#a0a0a0] shrink-0"></span><span class="w-[8px] h-[30px] ml-[3px] shrink-0 border-l-2 border-dotted border-[#c0c0c0]"></span>';
            if (item === '.') return '<span class="w-[6px] h-[30px] shrink-0 border-l-2 border-dotted border-[#c0c0c0]"></span>';
            const on = item.includes('!'), drop = item.includes('+');
            const id = item.replace(/[!+]/g, '');
            const arrow = '<svg class="w-2 h-2" viewBox="0 0 8 8"><path d="M0 2h8L4 7z" fill="#222"/></svg>';
            let html = `<button aria-label="${id}" class="w-[31px] shrink-0 flex items-center justify-center ${on ? 'h-[29px] bg-[#cce8ff] border border-[#99d1ff]' : 'h-[29px]'}">${icon(id)}</button>`;
            if (drop) html += `<button aria-label="${id} options" class="w-[15px] shrink-0 h-[29px] flex items-center justify-center ${on ? 'bg-[#cce8ff] border border-l-0 border-[#99d1ff]' : ''}">${arrow}</button>`;
            return html;
        }
        document.getElementById('mainToolbar').innerHTML = ('. i-new i-open+ i-save i-close | i-doc1 i-doc2 i-doc3 i-doc4 i-doc5 i-doc6 | i-win1 i-win2 i-win3 : ' +
            'i-barsadd i-curveadd i-sigadd i-pencil!+ | i-barsgear | i-wingear | i-ohlc! i-candle i-hollow i-line | i-v1 i-v2 i-kagi i-pf i-ha i-profile | ' +
            'i-depth i-delta | i-cursor! i-cross | i-note i-axis! i-clock | i-list i-trade i-glasses i-sliders i-knight i-slpage i-steps i-table i-chpage : ' +
            'i-inx i-outx i-iny i-outy i-up i-down i-left i-right i-wide i-narrow i-zoom').split(' ').map(tool).join('') +
            '<span class="ml-auto mr-1 self-start mt-1 text-[#4f74b8] text-[14px] leading-3">»</span>';
        document.getElementById('drawToolbar').innerHTML = ('. d-trend d-hline d-vline d-chan d-chan2 d-fork d-fork2 d-fork2 | d-fib d-fan d-elliott d-arc d-zones d-zones2 | d-gann d-grid | ' +
            'd-calc d-text d-rect d-oval d-curve d-dn d-upa | d-magnet! d-lock : t-zig+ t-area+ t-range+ t-sec+ t-min+ t-hour+ t-day+ t-week t-month t-quarter t-year').split(' ').map(tool).join('');

        // Window buttons
        document.querySelectorAll('[data-controls]').forEach(el => {
            const active = el.dataset.controls === 'active';
            el.innerHTML = ['w-pop', 'w-min', 'w-max', 'w-x'].map(id =>
                `<button aria-label="${id}" class="w-8 h-[18px] flex items-center justify-center border border-[#7c8ba0] rounded-xs ${active && id === 'w-x' ? 'bg-linear-to-b from-[#e9a99a] to-[#c0402a]' : active ? 'bg-linear-to-b from-[#c9d9ea] to-[#9db8d6]' : 'bg-[#cfdbe8]'}"><svg class="w-5 h-4"><use href="#${id}"/></svg></button>`).join('');
        });
        document.getElementById('closers').innerHTML = '<button class="w-[14px] h-[14px] border border-white text-[10px] leading-[12px]">X</button>'.repeat(5);

        // Watchlist quotes: symbol, previous, last, net change, % change, custom
        const quotes = `@ES#C|3 038,0000|3 057,2500|19,2500|0,63|20,
@NQ#C|9 460,2500|9 586,7500|126,5000|1,34|128,
@RTY#C|1 407,2000|1 406,3000|-0,9000|-0,06|0,
@YM#C|25 457,0000|25 487,0000|30,0000|0,12|-460,

@FV#C|125,3984|125,6016|0,2031|0,16|0,000
@TY#C|138,6563|139,0156|0,3594|0,26|0,000
@US#C|177,0625|178,2188|1,1563|0,65|0,000

@AD#C|0,6659|0,6670|0,0011|0,17|0,003
@BP#C|1,2344|1,2346|0,0002|0,02|0,002
@CD#C|0,7267|0,7266|-0,0001|-0,01|-0,000
@EU#C|1,1093|1,1111|0,0018|0,16|0,003
@JY#C|0,0093|0,0093|0,0000|-0,16|0,000
@SF#C|1,0384|1,0409|0,0025|0,24|0,003

@C#C|327,5000|325,5000|-2,0000|-0,61|-1,750
@O#C|328,5000|325,7500|-2,7500|-0,84|-4,000
@S#C|847,0000|840,7500|-6,2500|-0,74|-6,000
@SM#C|284,3000|283,2000|-1,1000|-0,39|-1,400
@BO#C|27,3900|27,4000|0,0100|0,04|0,050
@W#C|514,5000|521,5000|7,0000|1,36|6,250

@GF#C|135,5000|134,8750|-0,6250|-0,46|-0,975
@LE#C|101,1750|99,9000|-1,2750|-1,26|-1,225
@HE#C|55,6500|57,0250|1,3750|2,47|1,475

@QM#C|33,7000|35,2500|1,5500|4,60|1,600
@QG#C|1,8250|1,8350|0,0100|0,55|0,015
@QU#C|1,0260|1,0180|-0,0080|-0,78|0,002

QHG#C|2,4135|2,4425|0,0290|1,20|0,034
QGC#C|1 728,3000|1 743,0000|14,7000|0,85|11,600
QPL#C|868,1000|873,1000|5,0000|0,58|10,100
QSI#C|17,9670|18,4850|0,5180|2,88|0,590

`.split('\n');
        document.getElementById('quotes').innerHTML = quotes.map((line, i) => {
            const [sym = '', prev = '', last = '', net = '', pct = '', custom = ''] = line.split('|');
            const shade = i % 2 ? 'bg-linear-to-b from-[#cfcfcf] to-[#b9b9b9]' : 'bg-linear-to-b from-[#e4e4e4] to-[#cfcfcf]';
            const tone = pct.startsWith('-') ? 'text-[#ff0000]' : 'text-[#008000]';
            const cell = 'text-right pr-[2px] border-r border-[#b4b4b4] whitespace-nowrap';
            return `<tr class="h-[18px] ${shade}">
                <td class="pl-px ${i === 0 ? 'outline-2 -outline-offset-2 outline-black' : 'border-r border-[#b4b4b4]'}">${sym}</td>
                <td class="${cell}">${prev}</td><td class="${cell} ${tone}">${last}</td><td class="${cell} ${tone}">${net}</td>
                <td class="${cell} ${tone}">${pct}</td><td class="text-right whitespace-nowrap">${custom}</td></tr>`;
        }).join('');

        // Workspace tabs
        const tabs = [['End Of Day Futures', 102], ['Intra Day Futures', 90], ['ES', 13], ['RTY', 21], ['NQ Ticks', 48], ['NQ Trading Chart', 93], ['Trading NQ', 62], ['CL SI Trading', 70], ['YM', 19], ['BBands', 41], ['IQ Feed Daily', 75]];
        document.getElementById('workspaceTabs').innerHTML = tabs.map(([name, w], i) => {
            const on = i === tabs.length - 1;
            const prev = i ? '#c3c3c3' : '#f0f0f0', cur = on ? '#ffffff' : '#c3c3c3';
            return `<svg class="w-4 h-full" viewBox="0 0 16 20"><path d="M0 0h8l-6 20H0z" fill="${prev}"/><path d="M3 0h13v20h-5z" fill="${cur}"/><path d="M3 0l8 19.500h5" fill="none" stroke="#777"/>${i ? '<path d="M0 19.500h2l4-11" fill="none" stroke="#777"/>' : ''}</svg>` +
                `<button class="h-full whitespace-nowrap border-b border-[#777] ${on ? 'bg-white font-semibold' : 'bg-[#c3c3c3]'}" style="width:${w}px">${name}</button>`;
        }).join('') + '<svg class="w-4 h-full" viewBox="0 0 16 20"><path d="M0 0h13L5 20H0z" fill="#fff"/><path d="M0 19.500h5L13 0" fill="none" stroke="#777"/></svg>';

        document.getElementById('panelTabs').innerHTML = [['Accounts', 61], ['Orders', 48], ['Open Positions', 93], ['Strategy Positions', 105], ['Positions History', 101], ['Logs', 50], ['Alerts', 45], ['Trades Summary', 98]].map(([name, w]) =>
            `<button style="width:${w}px" class="whitespace-nowrap border-[#d9d9d9] ${name === 'Logs' ? 'h-[24px] bg-white text-left pl-2 pb-[2px]' : 'h-[21px] border-t border-r bg-[#f0f0f0] text-center'}">${name}</button>`).join('');

        document.getElementById('logs').innerHTML = ['Market Data Connection Closed', 'Trading System Connection Closed', 'PnL Connection Closed'].map((msg, i) =>
            `<tr class="h-[18px] ${i % 2 ? 'bg-black' : 'bg-[#161616]'}"><td class="whitespace-nowrap overflow-hidden ${i ? '' : 'outline -outline-offset-1 outline-white'}">020/05/30 3:58:31 p</td><td class="pl-1.5">Information</td><td></td><td class="text-center">Rithmic 01</td><td class="text-center">-</td><td class="pl-px">${msg}</td><td></td></tr>`).join('');

        // ---- Chart ----
        const STEP = 7, X0 = 3;
        const x = k => X0 + STEP * k;
        const grid = '#585858';
        // high, low, close of every 5 minute bar, in pixels from the base line
        const bars = `40 67 55,45 67 62,50 79 78,33 81 36,34 110 101,89 107 97,88 109 101,92 116 102,95 112 99,100 141 125,122 144 123,116 138 127,94 133 99,95 112 99,94 103 99,73 123 95,87 114 90,89 135 118,83 131 109,67 116 74,52 98 86,76 100 87,81 105 97,97 142 123,111 156 151,137 158 150,143 172 144,137 182 176,167 182 172,141 175 150,140 158 143,122 179 157,147 163 151,129 158 130,119 135 125,119 138 123,122 152 137,129 147 144,127 149 137,129 156 146,122 156 120,104 120 115,104 119 106,102 123 108,102 119 109,104 119 113,111 131 117,102 128 117,109 128 120,78 131 83,62 88 66,48 75 57,41 65 48,45 70 67,62 74 64,62 79 76,59 79 64,53 74 67,57 79 60,53 81 76,71 80 74,73 81 74,55 80 59,45 61 53,52 63 62,60 78 73,36 72 38,36 49 45,43 56 48,45 65 59,52 67 66,60 78 71,29 76 33,29 58 50,41 65 59,55 76 64,34 82 45,43 61 51,47 67 62,43 79 71,62 89 87,74 128 111,97 117 101,88 105 94,90 128 106,87 112 90,90 121 111,102 137 130,120 142 134,123 152 130,115 130 123,122 147 143,118 148 127,106 173 136,108 152 125,113 161 132,76 147 97,90 114 109,97 163 143,127 166 141,116 198 178,162 198 179,150 186 158,146 196 171,162 219 190,153 191 169,162 200 185,181 226 205,197 243 228,216 254 246,209 252 226,201 264 249,218 250 240,186 245 188,179 212 199,175 201 199,175 213 202,186 233 207,164 219 186,178 210 200,162 211 164,153 179 176,162 184 179,160 184 169,165 200 195,181 208 207,204 247 240,226 250 233,214 243 221,219 245 237,205 247 205,205 240 230,226 250 247,240 332 282,139 297 181,167 219 212,179 222 200,167 210 185,167 203 190,178 201 195,181 205 199,186 206 202,200 233 228,216 238 232,218 240 228,219 248 226,209 233 218,193 231 223,122 233 132,108 168 165,125 170 130,116 152 127,83 135 97,90 123 106,97 133 130,111 147 143,127 191 186,181 294 219,43 254 50,-25 51 -13,-13 34 30,-1 63 50,29 79 36,-8 48 -2,-4 58 41,6 67 47,19 61 26,13 48 24,13 67 57,-36 58 -25,-48 25 8,-79 20 -62,-93 -54 -93,-109 -80 -104,-121 -80 -118,-128 -108 -126,-132 -117 -119,-130 -110 -121,-125 -113 -114,-128 -113 -125`.split(',').map(b => b.split(' ').map(Number));
        const average = [66,66,66,66,67,68,69,72,74,78,81,84,84,86,86,86,86,86,87,86,86,86,86,87,90,93,96,101,106,110,113,116,118,118,118,118,119,120,120,121,120,120,119,118,118,118,118,117,117,112,105,97,89,88,86,86,84,83,82,82,81,81,81,80,80,80,79,78,78,77,77,77,76,76,76,76,76,76,75,75,76,77,80,81,82,83,86,91,95,98,99,101,102,103,104,105,105,105,106,106,109,110,111,112,117,118,125,134,143,156,159,166,172,172,172,173,173,173,173,174,174,173,174,173,173,174,175,176,177,179,180,182,186,196,196,196,196,196,195,195,195,195,196,197,199,199,200,202,198,197,194,190,176,167,165,163,164,164,161,148,144,142,141,136,134,132,126,117,117,116,116,107,95,86,64,42,26,12,-7,-19];
        const falling = k => (k >= 8 && k <= 48) || (k >= 84 && k <= 150);

        // Bands as bar:level pairs
        const bands = [
            ['#808080', '0:85 2:85 3:86 4:88 5:90 6:91 7:94'],
            ['#808080', '0:105 2:105 3:106 4:110 5:111 6:112 7:115'],
            ['#ff0000', '0:124 2:124 3:125 4:129 5:130 6:132 7:135'],
            ['#ff0000', '8:12 10:19 11:22 14:22 15:21 17:19 18:17 20:14 22:13 23:12 24:14 25:17 27:22 28:28 29:31 31:34 32:36 34:37 38:40 39:38 42:36 43:34 48:34'],
            ['#808080', '8:33 10:40 11:42 14:43 17:42 18:40 20:37 23:37 24:40 25:42 27:49 28:54 31:62 32:64 34:64 38:66 39:66 42:64 43:62 48:62'],
            ['#808080', '8:53 10:61 11:63 14:65 17:64 18:62 20:61 23:62 24:66 27:76 28:82 31:89 32:91 34:91 36:93 39:94 42:91 43:90 48:90'],
            ['#808080', '49:141 51:124 52:118 54:114 56:111 58:108 62:107 65:106 67:104 70:101 72:99 74:99 79:99 80:99 82:103 84:106'],
            ['#808080', '49:169 51:153 52:147 54:141 56:138 58:136 62:133 65:131 67:127 70:123 72:122 75:121 79:120 80:121 82:125 83:126 84:129'],
            ['#ff0000', '49:197 51:181 52:175 54:168 56:166 58:163 62:158 65:157 67:153 70:146 72:145 74:143 79:142 81:144 82:147 84:151'],
            ['#ff0000', '84:14 85:14 86:18 88:27 90:31 91:32 93:32 94:30 96:27 98:24 99:25 103:25 105:28 107:40 108:48 109:60 110:61 112:71 113:68 116:67 117:65 119:63 121:61 122:62 125:61 127:64 130:67 131:70 132:74 133:79 134:73 135:71 137:69 140:67 142:69 144:76 146:80 147:82 148:76 149:74 151:68'],
            ['#808080', '84:37 85:37 86:41 88:50 90:54 91:55 93:55 95:54 97:52 98:51 100:53 103:55 105:58 106:62 107:71 108:80 109:92 110:95 112:106 113:103 116:104 117:101 119:99 123:100 125:99 127:102 130:105 131:107 132:111 133:118 134:114 136:112 138:110 142:110 144:116 147:123 148:117 150:111'],
            ['#808080', '84:60 85:60 86:64 88:72 90:78 93:79 95:80 96:79 98:78 100:81 103:83 105:89 107:101 109:124 110:127 112:138 116:138 117:137 121:136 125:136 127:139 129:142 131:144 132:148 133:157 134:154 138:153 142:153 144:157 147:162 148:158 150:154'],
            ['#808080', '151:231 152:219 153:209 154:206 155:204 156:205 157:207 158:206 159:195 160:191 162:187 163:184 165:181 166:175 167:165 170:165 171:159 172:150 173:138 174:114 175:96 176:79 177:61 178:44 179:32'],
            ['#808080', '151:272 152:258 153:249 154:245 155:244 156:246 157:249 158:252 159:242 160:238 162:235 163:230 165:228 166:221 167:214 170:214 171:209 172:201 173:190 174:168 175:146 176:129 177:111 178:93 179:82'],
            ['#ff0000', '151:313 152:299 153:289 154:286 155:285 156:287 157:292 158:299 159:289 160:285 161:282 162:282 163:276 165:276 166:269 167:262 168:260 169:262 170:265 171:261 172:250 173:240 174:220 175:195 176:177 177:162 178:146 179:133']
        ];
        const points = (pairs, y0, unit = 1) => pairs.split(' ').map(p => p.split(':').map(Number)).map(([k, v]) => `${x(k) + 0.5},${y0 + v * unit + 0.5}`).join(' ');
        const hours = [[2, '02:00'], [14, '03:00'], [26, '04:00'], [38, '05:00'], [50, '06:00'], [62, '07:00'], [74, '08:00'], [86, '09:00'], [98, '10:00'], [110, '11:00'], [122, '12:00'], [134, '13:00'], [146, '14:00'], [158, '15:00'], [170, '16:00'], [180, '17:05']];
        const vgrid = h => hours.map(([k]) => `<line x1="${x(k) + .5}" x2="${x(k) + .5}" y1="0" y2="${h}" stroke="${grid}" stroke-dasharray="1 3"/>`).join('') +
            `<line x1="${x(179) + .5}" x2="${x(179) + .5}" y1="0" y2="${h}" stroke="#505050" stroke-dasharray="9 4 2 4"/>`;

        const BASE = 223;
        const priceY = p => Math.round(79.4 + (3060 - p) * 6.985);
        let svg = vgrid(582);
        for (let p = 2990; p <= 3065; p += 5) svg += `<line x1="0" x2="100%" y1="${priceY(p) + .5}" y2="${priceY(p) + .5}" stroke="${grid}" stroke-dasharray="1 3"/>`;
        bars.forEach(([hi, lo, close], k) => {
            const open = k ? bars[k - 1][2] : 60;
            svg += `<path d="M${x(k)} ${BASE + hi}h1v${lo - hi}h-1zM${x(k)} ${BASE + close}h3v1h-3zM${x(k) - 2} ${BASE + Math.min(lo - 1, Math.max(hi, open))}h2v1h-2z" fill="#00ff00"/>`;
        });
        bands.forEach(([color, pairs]) => { svg += `<polyline points="${points(pairs, BASE)}" fill="none" stroke="${color}" stroke-dasharray="18 6"/>`; });
        average.forEach((y, k) => { svg += `<circle cx="${x(k) + .5}" cy="${BASE + y + .5}" r="2.9" fill="${falling(k) ? '#ff00ff' : '#0090ff'}" shape-rendering="auto"/>`; });
        document.getElementById('price').innerHTML = svg;

        // Price axis, with tags over the plain labels
        let axis = '';
        for (let p = 2990; p <= 3065; p += 5) {
            if (p === 3035) continue;
            const text = (p < 3000 ? '2 ' + (p - 2000) : '3 ' + String(p - 3000).padStart(3, '0')) + ',0000';
            axis += `<div class="absolute left-0 w-full flex items-center" style="top:${priceY(p) - 7}px"><span class="w-[3px] h-px bg-red-600"></span><span class="ml-[2px]">${text}</span></div>`;
        }
        axis += '<div class="absolute left-[5px] top-[149px] w-20 h-[9px] bg-black"></div>';
        const tag = (y, h, color, text) => `<div class="absolute left-[2px] right-px pl-[6px] overflow-hidden text-black leading-[14px] [clip-path:polygon(0_7px,6px_0,100%_0,100%_100%,6px_100%)]" style="top:${y}px;height:${h}px;background:${color}">${text}</div>`;
        axis += '<div class="absolute left-[5px] top-[98px] w-20 h-[13px] bg-black"></div>';
        axis += tag(92, 7, '#00ff00', '3 057,2500') + tag(198, 13, '#0090ff', '3 042,1374') + tag(248, 13, '#808080', '3 034,9574') + tag(298, 13, '#808080', '3 027,7774') + tag(348, 13, '#ff0000', '3 020,5974');
        document.getElementById('priceLabels').innerHTML = axis;

        // Momentum study, thirds of a pixel around the zero line
        const ZERO = 80;
        const study = [0,-10,-25,-8,-20,-38,-40,-35,-20,-28,-30,-30,-6,12,18,18,19,-2,-8,12,22,19,11,-18,-46,-58,-46,-50,-42,-22,4,7,7,19,28,30,18,-2,-5,-8,4,22,28,27,22,13,4,1,-5,16,43,58,61,37,18,0,0,0,4,0,-4,-8,4,16,16,7,15,22,22,7,-7,-17,5,13,7,-5,0,0,0,-12,-26,-44,-44,-34,-19,-4,-7,-24,-34,-26,-16,-16,-7,-4,0,4,22,28,5,-17,-44,-50,-29,-22,-27,-20,-10,-25,-46,-61,-48,-42,-28,12,36,39,28,15,13,15,27,30,24,21,2,-17,-46,-55,-38,-25,-10,2,-15,-43,5,33,39,45,39,27,13,0,-20,-31,-31,-20,-5,0,58,72,81,75,78,70,31,1,-43,-85,10,133,156,109,64,60,34,3,-1,7,-7,28,36,72,109,117,112,94,67,43,22,16];
        let st = vgrid(113);
        [26, 80].forEach(y => { st += `<line x1="0" x2="100%" y1="${y + .5}" y2="${y + .5}" stroke="${grid}" stroke-dasharray="1 3"/>`; });
        study.forEach((v, k) => {
            const prev = k ? study[k - 1] : 0;
            const h = Math.round(Math.abs(v) / 3);
            const color = v > 0 ? (v >= prev ? '#0090ff' : '#00ffff') : (v < prev ? '#ff00ff' : '#ffc0ff');
            st += `<rect x="${x(k) - 1}" y="${v > 0 ? ZERO - h : ZERO}" width="2" height="${h}" fill="${color}"/>`;
        });
        const third = 1 / 3;
        st += `<polyline points="${points('0:-15 4:-15 6:-24 23:-24 25:-30 74:-30 77:-24 79:-12 80:-12 82:-24 99:-24 101:-27 108:-27 109:-33 156:-33 158:-45 179:-45', ZERO, third)}" fill="none" stroke="#9848ff"/>`;
        st += `<polyline points="${points('0:21 10:21 12:18 39:18 41:13 42:15 49:15 51:27 101:27 103:13 113:13 114:18 135:18 137:21 147:21 150:39 158:39 159:55 161:75 179:75', ZERO, third)}" fill="none" stroke="#9848ff"/>`;
        st += `<line x1="0" x2="${x(179) + 2}" y1="${ZERO + .5}" y2="${ZERO + .5}" stroke="#ffff00"/>`;
        st += `<polyline points="${points('0:-10 2:6 4:8 6:25 7:30 11:30 13:10 15:-7 16:-11 17:-6 18:-3 20:-10 22:-13 23:-2 25:26 26:35 28:42 29:35 31:13 33:1 35:-18 37:-12 39:-1 41:-12 43:-21 45:-17 48:-1 50:-18 52:-42 54:-32 56:-13 59:-5 61:3 64:-9 66:-7 68:-15 70:-7 72:3 74:-7 75:-2 78:-1 80:13 82:31 84:28 86:15 89:28 92:19 95:8 97:-13 98:-9 100:13 102:31 105:23 107:24 109:40 110:45 112:38 113:20 115:-12 116:-18 117:-15 119:-15 121:-23 122:-24 123:-22 125:-6 127:27 128:34 129:31 130:18 132:15 133:24 134:17 136:-14 138:-30 140:-27 142:-9 144:17 145:19 147:13 148:-2 150:-44 152:-65 153:-66 154:-58 156:-10 157:22 158:10 159:-40 160:-76 161:-85 163:-75 164:-63 166:-31 168:-12 170:-23 172:-67 174:-89 175:-90 176:-84 178:-54 179:-41', ZERO, third)}" fill="none" stroke="#ffff00"/>`;
        document.getElementById('study').innerHTML = st;
        document.getElementById('studyLabels').innerHTML = '<div class="absolute left-0 top-[19px] flex items-center"><span class="w-[3px] h-px bg-red-600"></span><span class="ml-[2px]">5,00</span></div>' +
            tag(59, 13, '#9848ff', '') + tag(61, 8, '#ffff00', '1,22') + tag(69, 5, '#00ffff', '0,49') + tag(74, 13, '#ffff00', '0,00') + tag(99, 13, '#9848ff', '-2,38');
        document.getElementById('times').innerHTML = hours.map(([k, t]) => `<path d="M${x(k) + .5} 0v2" stroke="#ff0000"/><text x="${x(k) + 2}" y="13" fill="#fff">${t}</text>`).join('');
    </script>
</body>
</html>
